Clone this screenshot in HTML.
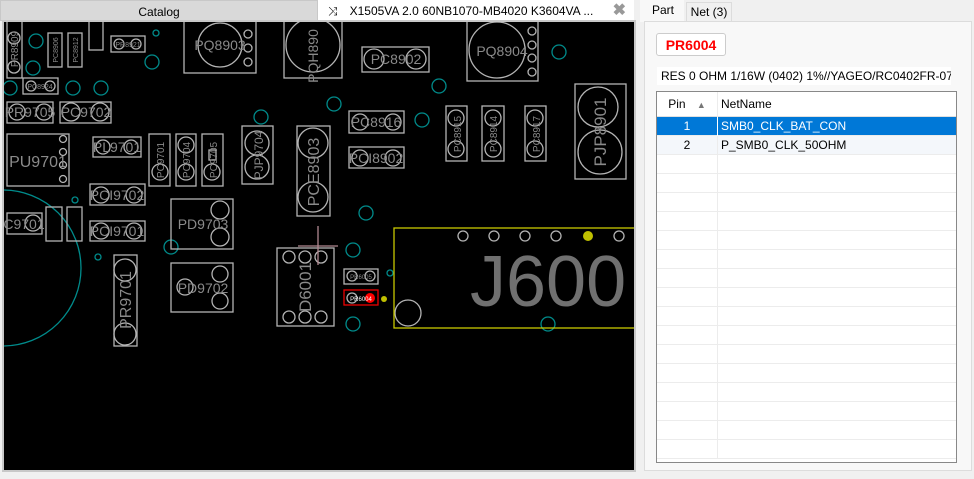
<!DOCTYPE html>
<html><head><style>
*{margin:0;padding:0;box-sizing:border-box}
body{width:974px;height:479px;background:#f0f0f0;font-family:"Liberation Sans",sans-serif;font-size:12px;position:relative;overflow:hidden}
.tab{position:absolute;top:0;height:21px;line-height:22px;text-align:center;font-size:12px}
#cat{left:0;width:318px;background:#d9d9d9;border:1px solid #c8c8c8}
#doc{left:318px;width:316px;background:#fff;text-align:left;padding-left:10px}
#canvas{position:absolute;left:2px;top:20px;width:634px;height:452px;border:2px solid #c8c8c8;background:#000}
#rp{position:absolute;left:636px;top:0;width:338px;height:479px;background:#f0f0f0}
.ptab{position:absolute;top:0;height:21px;line-height:21px;font-size:12px}
#panel{position:absolute;left:8px;top:21px;width:328px;height:450px;background:#f8f8f8;border:1px solid #dcdcdc}
#pr{position:absolute;left:20px;top:33px;width:70px;height:23px;border:1px solid #ccc;border-radius:3px;background:#fff;color:#f00;font-weight:bold;font-size:14px;text-align:center;line-height:22px}
#desc{position:absolute;left:21px;top:67px;width:294px;height:18px;background:#fff;font-size:12px;line-height:18px;padding-left:4px;white-space:nowrap;overflow:hidden}
#tbl{position:absolute;left:20px;top:91px;width:301px;height:372px;border:1px solid #888;background:#fff;overflow:hidden}
.row{position:absolute;left:0;width:299px;height:19px;border-bottom:1px solid #ececec;line-height:19px}
.c1{position:absolute;left:0;width:61px;text-align:center;height:19px;border-right:1px solid #ececec}
.c2{position:absolute;left:64px}
</style></head><body>
<div class="tab" id="cat">Catalog</div>
<div class="tab" id="doc"><span style="margin-right:12px">⤨</span>X1505VA 2.0 60NB1070-MB4020 K3604VA ...<span style="position:absolute;right:8px;top:0;color:#999;font-weight:bold;font-size:16px">✖</span></div>
<div id="canvas">
<svg width="630" height="448" viewBox="4 22 630 448" xmlns="http://www.w3.org/2000/svg" font-family="Liberation Sans,sans-serif" style="display:block">
<g fill="none" stroke="#008b8b" stroke-width="1.3">
<circle cx="36" cy="41" r="7"/><circle cx="33" cy="68" r="7"/><circle cx="152" cy="62" r="7"/><circle cx="156" cy="33" r="3"/>
<circle cx="10" cy="88" r="7"/><circle cx="73" cy="88" r="7"/><circle cx="101" cy="88" r="7"/><circle cx="261" cy="117" r="7"/>
<circle cx="75" cy="200" r="3"/><circle cx="171" cy="247" r="7"/><circle cx="98" cy="257" r="3"/>
<circle cx="559" cy="52" r="7"/><circle cx="439" cy="86" r="7"/><circle cx="334" cy="104" r="7"/><circle cx="422" cy="120" r="7"/>
<circle cx="366" cy="213" r="7"/><circle cx="353" cy="250" r="7"/><circle cx="353" cy="324" r="7"/><circle cx="548" cy="324" r="7"/><circle cx="390" cy="273" r="3"/>
<circle cx="3" cy="268" r="78"/>
</g>
<g fill="none" stroke="#b4b4b4" stroke-width="1.3">
<rect x="184" y="20" width="72" height="53"/><circle cx="220" cy="45" r="22"/><circle cx="248" cy="34" r="4"/><circle cx="248" cy="48" r="4"/><circle cx="248" cy="62" r="4"/>
<rect x="284" y="20" width="58" height="58"/><circle cx="313" cy="45" r="27"/>
<rect x="362" y="47" width="67" height="25"/><circle cx="374" cy="59" r="10"/><circle cx="416" cy="59" r="10"/>
<rect x="467" y="20" width="71" height="61"/><circle cx="497" cy="50" r="28"/><circle cx="532" cy="31" r="4"/><circle cx="532" cy="45" r="4"/><circle cx="532" cy="58" r="4"/><circle cx="532" cy="72" r="4"/>
<rect x="575" y="84" width="51" height="95"/><circle cx="598" cy="107" r="20"/><circle cx="600" cy="152" r="22"/>
<rect x="349" y="111" width="55" height="22"/><circle cx="360" cy="122" r="8"/><circle cx="393" cy="122" r="8"/>
<rect x="349" y="147" width="55" height="21"/><circle cx="360" cy="158" r="8"/><circle cx="393" cy="158" r="8"/>
<rect x="446" y="106" width="21" height="55"/><circle cx="456" cy="118" r="8"/><circle cx="456" cy="149" r="8"/>
<rect x="482" y="106" width="22" height="55"/><circle cx="493" cy="118" r="8"/><circle cx="493" cy="149" r="8"/>
<rect x="525" y="106" width="21" height="55"/><circle cx="535" cy="118" r="8"/><circle cx="535" cy="149" r="8"/>
<rect x="297" y="126" width="33" height="90"/><circle cx="313" cy="143" r="15"/><circle cx="313" cy="197" r="15"/>
<rect x="277" y="248" width="57" height="78"/><circle cx="289" cy="257" r="6"/><circle cx="305" cy="257" r="6"/><circle cx="321" cy="257" r="6"/><circle cx="289" cy="317" r="6"/><circle cx="305" cy="317" r="6"/><circle cx="321" cy="317" r="6"/>
<rect x="344" y="269" width="34" height="15"/><circle cx="352" cy="276" r="5"/><circle cx="370" cy="276" r="5"/>
<circle cx="352" cy="298" r="5"/>
<circle cx="463" cy="236" r="5"/><circle cx="494" cy="236" r="5"/><circle cx="525" cy="236" r="5"/><circle cx="556" cy="236" r="5"/><circle cx="619" cy="236" r="5"/>
<circle cx="408" cy="313" r="13"/>
<rect x="7" y="20" width="15" height="58"/><circle cx="14" cy="38" r="6"/><circle cx="14" cy="67" r="6"/>
<rect x="48" y="33" width="14" height="34"/><rect x="68" y="33" width="14" height="34"/><rect x="89" y="20" width="14" height="30"/>
<rect x="111" y="36" width="34" height="16"/><circle cx="119" cy="44" r="5"/><circle cx="136" cy="44" r="5"/>
<rect x="23" y="78" width="35" height="16"/><circle cx="31" cy="86" r="5"/><circle cx="50" cy="86" r="5"/>
<rect x="7" y="102" width="46" height="21"/><circle cx="17" cy="112" r="8"/><circle cx="44" cy="112" r="8"/>
<rect x="60" y="102" width="51" height="21"/><circle cx="71" cy="112" r="9"/><circle cx="100" cy="112" r="9"/>
<rect x="7" y="134" width="62" height="52"/><circle cx="63" cy="139" r="3.5"/><circle cx="63" cy="152" r="3.5"/><circle cx="63" cy="165" r="3.5"/><circle cx="63" cy="179" r="3.5"/>
<rect x="93" y="137" width="48" height="20"/><circle cx="103" cy="147" r="7"/><circle cx="131" cy="147" r="7"/>
<rect x="149" y="134" width="21" height="52"/><circle cx="160" cy="172" r="8"/>
<rect x="176" y="134" width="20" height="52"/><circle cx="186" cy="145" r="8"/><circle cx="186" cy="172" r="8"/>
<rect x="202" y="134" width="21" height="52"/><circle cx="212" cy="172" r="8"/><rect x="209" y="150" width="7" height="10"/>
<rect x="242" y="126" width="31" height="58"/><circle cx="257" cy="143" r="12"/><circle cx="257" cy="167" r="12"/>
<rect x="90" y="184" width="55" height="21"/><circle cx="101" cy="195" r="8"/><circle cx="134" cy="195" r="8"/>
<rect x="7" y="213" width="35" height="21"/><circle cx="33" cy="223" r="8"/>
<rect x="46" y="207" width="16" height="34"/><rect x="67" y="207" width="15" height="34"/>
<rect x="90" y="221" width="55" height="20"/><circle cx="101" cy="231" r="8"/><circle cx="134" cy="231" r="8"/>
<rect x="171" y="199" width="62" height="50"/><circle cx="220" cy="210" r="9"/><circle cx="220" cy="237" r="9"/>
<rect x="114" y="255" width="23" height="91"/><circle cx="125" cy="270" r="11"/><circle cx="125" cy="334" r="11"/>
<rect x="171" y="263" width="62" height="49"/><circle cx="220" cy="274" r="8"/><circle cx="220" cy="301" r="8"/><circle cx="185" cy="287" r="8"/>
</g>
<g stroke="#b08890" stroke-width="1.3"><line x1="318" y1="226" x2="318" y2="265"/><line x1="298" y1="246" x2="338" y2="246"/></g>
<rect x="394" y="228" width="245" height="100" fill="none" stroke="#c8c800" stroke-width="1.3"/>
<circle cx="588" cy="236" r="5" fill="#c0c000"/><circle cx="384" cy="299" r="3" fill="#c0c000"/>
<rect x="344" y="290" width="34" height="15" fill="none" stroke="#e00" stroke-width="1.3"/><circle cx="370" cy="298" r="5" fill="#f00"/>
<g fill="#8a8a8a" font-size="14" text-anchor="middle">
<text x="220" y="50">PQ8903</text><text x="502" y="56">PQ8904</text><text x="396" y="64">PC8902</text>
<text x="376" y="127">PC8916</text><text x="376" y="163">PCI8902</text>
<text x="30" y="117">PR9705</text><text x="86" y="117">PC9702</text>
<text x="38" y="167" font-size="16">PU9701</text><text x="117" y="152">PL9701</text>
<text x="117" y="200">PCI9702</text><text x="117" y="236">PCI9701</text><text x="24" y="229">C9701</text>
<text x="203" y="229">PD9703</text><text x="203" y="293">PD9702</text>
<text x="470" y="306" font-size="72" fill="#707070" text-anchor="start">J600</text>
<text transform="translate(318,56) rotate(-90)" font-size="14">PQH890</text>
<text transform="translate(606,132) rotate(-90)" font-size="17">PJP8901</text>
<text transform="translate(319,172) rotate(-90)" font-size="16">PCE8903</text>
<text transform="translate(311,287) rotate(-90)" font-size="17">D6001</text>
<text transform="translate(131,300) rotate(-90)" font-size="16">PR9701</text>
<text transform="translate(263,155) rotate(-90)" font-size="12">PJP9704</text>
<text transform="translate(461,134) rotate(-90)" font-size="10">PC8915</text>
<text transform="translate(497,134) rotate(-90)" font-size="10">PC8914</text>
<text transform="translate(540,134) rotate(-90)" font-size="10">PC8917</text>
<text transform="translate(164,160) rotate(-90)" font-size="10">PC9701</text>
<text transform="translate(190,160) rotate(-90)" font-size="10">PC9704</text>
<text transform="translate(217,160) rotate(-90)" font-size="10">PC9705</text>
<text transform="translate(18,49) rotate(-90)" font-size="10">PR8909</text>
<text transform="translate(58,50) rotate(-90)" font-size="7">PC8906</text>
<text transform="translate(78,50) rotate(-90)" font-size="7">PC8912</text>
<text x="128" y="47" font-size="7">PR8921</text><text x="40" y="89" font-size="7">PC8924</text>
<text x="361" y="279" font-size="6">PR6005</text><text x="361" y="301" font-size="6" fill="#fff">PR6004</text>
</g>
</svg>
</div>
<div id="rp">
<div class="ptab" style="left:4px;width:44px;background:#f8f8f8;padding-left:12px;height:22px">Part</div>
<div class="ptab" style="left:50px;width:46px;border:1px solid #dcdcdc;border-bottom:none;background:#f0f0f0;top:2px;height:19px;line-height:19px;text-align:center">Net (3)</div>
<div id="panel"></div>
<div id="pr">PR6004</div>
<div id="desc">RES 0 OHM 1/16W (0402) 1%//YAGEO/RC0402FR-07</div>
<div id="tbl">
<div class="row" style="top:0;height:25px;line-height:24px;border-bottom:1px solid #e0e0e0"><div class="c1" style="height:25px">Pin <span style="color:#777;font-size:9px;margin-left:8px">▲</span></div><div class="c2">NetName</div></div>
<div class="row" style="top:25px;background:#0078d7;color:#fff"><div class="c1" style="border-color:#fff">1</div><div class="c2">SMB0_CLK_BAT_CON</div></div>
<div class="row" style="top:44px;background:#f4f7fb"><div class="c1">2</div><div class="c2">P_SMB0_CLK_50OHM</div></div>
<div class="row" style="top:63px"><div class="c1"></div></div><div class="row" style="top:82px"><div class="c1"></div></div>
<div class="row" style="top:101px"><div class="c1"></div></div><div class="row" style="top:120px"><div class="c1"></div></div>
<div class="row" style="top:139px"><div class="c1"></div></div><div class="row" style="top:158px"><div class="c1"></div></div>
<div class="row" style="top:177px"><div class="c1"></div></div><div class="row" style="top:196px"><div class="c1"></div></div>
<div class="row" style="top:215px"><div class="c1"></div></div><div class="row" style="top:234px"><div class="c1"></div></div>
<div class="row" style="top:253px"><div class="c1"></div></div><div class="row" style="top:272px"><div class="c1"></div></div>
<div class="row" style="top:291px"><div class="c1"></div></div><div class="row" style="top:310px"><div class="c1"></div></div>
<div class="row" style="top:329px"><div class="c1"></div></div><div class="row" style="top:348px"><div class="c1"></div></div>
</div>
</div>
</body></html>
